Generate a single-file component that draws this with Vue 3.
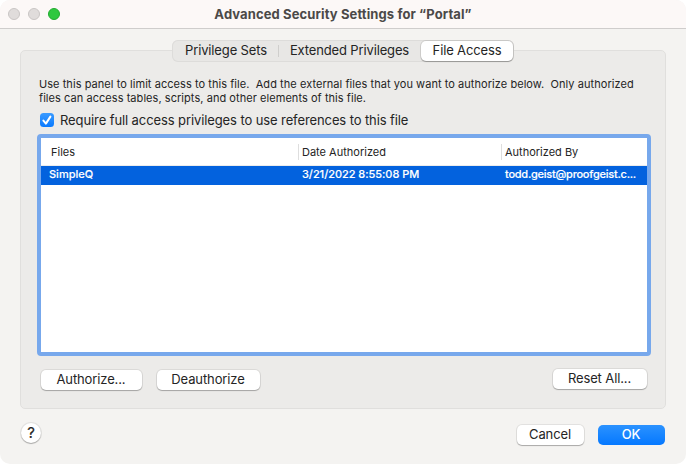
<script setup>
import { ref } from 'vue'

const tabs = [
  { id: 'sets', label: 'Privilege Sets' },
  { id: 'extended', label: 'Extended Privileges' },
  { id: 'files', label: 'File Access' },
]
const active = ref('files')
const required = ref(true)
const rows = [
  { file: 'SimpleQ', date: '3/21/2022 8:55:08 PM', by: 'todd.geist@proofgeist.c...' },
]
</script>

<template>
  <div class="window">
    <header class="titlebar">
      <div class="lights">
        <span class="light"></span>
        <span class="light"></span>
        <span class="light zoom"></span>
      </div>
      <h1 class="title">Advanced Security Settings for “Portal”</h1>
    </header>

    <main class="content">
      <nav class="tabs">
        <button
          v-for="tab in tabs"
          :key="tab.id"
          class="tab"
          :class="[tab.id, { active: tab.id === active }]"
          @click="active = tab.id"
        >{{ tab.label }}</button>
      </nav>

      <section class="panel">
        <p class="hint">
          <span class="line">Use this panel to limit access to this file.&nbsp; Add the external files that you want to authorize below.&nbsp; Only authorized</span>
          <span class="line">files can access tables, scripts, and other elements of this file.</span>
        </p>
        <div class="check" @click="required = !required">
          <span class="box">
            <svg v-if="required" viewBox="0 0 14 14" width="14" height="14">
              <path d="M3.4 7.6 5.9 10.6 10.4 3.6" fill="none" stroke="#fff" stroke-width="2" stroke-linecap="round" stroke-linejoin="round" />
            </svg>
          </span>
          <span class="check-label">Require full access privileges to use references to this file</span>
        </div>

        <div class="list">
          <div class="head">
            <span class="cell first">Files</span>
            <span class="cell">Date Authorized</span>
            <span class="cell">Authorized By</span>
          </div>
          <div v-for="row in rows" :key="row.file" class="row">
            <span class="name">{{ row.file }}</span>
            <span class="date">{{ row.date }}</span>
            <span class="by">{{ row.by }}</span>
          </div>
        </div>

        <div class="actions">
          <button class="btn authorize">Authorize...</button>
          <button class="btn deauthorize">Deauthorize</button>
          <button class="btn reset">Reset All...</button>
        </div>
      </section>

      <footer class="footer">
        <button class="help">?</button>
        <button class="btn cancel">Cancel</button>
        <button class="btn ok">OK</button>
      </footer>
    </main>
  </div>
</template>

<style>
body {
  margin: 0;
  background: #fff;
}
</style>

<style scoped>
.window {
  box-sizing: border-box;
  width: 686px;
  height: 464px;
  border-radius: 10px;
  overflow: hidden;
  background: #f4f3f1;
  color: #242424;
  font-family: Inter, "Liberation Sans", sans-serif;
  font-size: 13px;
}
button {
  box-sizing: border-box;
  margin: 0;
  padding: 0;
  border: 0;
  font: inherit;
  color: inherit;
  white-space: nowrap;
}
.titlebar {
  box-sizing: border-box;
  display: grid;
  grid-template-columns: 60px 1fr 60px;
  align-items: center;
  height: 29px;
  background: #fcf8f7;
  border-bottom: 1px solid #cfcdcc;
}
.lights {
  display: flex;
  gap: 8px;
  padding-left: 8px;
}
.light {
  box-sizing: border-box;
  flex: none;
  width: 12px;
  height: 12px;
  border-radius: 50%;
  background: #e0dcdb;
  border: 1px solid #c9c5c4;
}
.light.zoom {
  background: #2fc840;
  border-color: #22ab30;
}
.title {
  margin: 0;
  text-align: center;
  font-size: 13px;
  line-height: 16px;
  font-weight: 700;
  letter-spacing: .11px;
  color: #4b4948;
  white-space: nowrap;
}
.content {
  padding: 11px 20px 0;
}
.tabs {
  position: relative;
  z-index: 1;
  box-sizing: border-box;
  display: flex;
  width: 342px;
  height: 22px;
  margin: 0 auto -12px 152px;
  background: #e8e7e5;
  border-radius: 6px;
  box-shadow: inset 0 0 0 1px #dddcda;
}
.tab {
  height: 22px;
  padding-bottom: 2px;
  line-height: 18px;
  background: none;
  text-align: center;
  letter-spacing: -.14px;
}
.tab.sets {
  width: 107px;
  padding-left: 1px;
  background: linear-gradient(#cfcecc, #cfcecc) right 0 top 5px / 1px 12px no-repeat;
}
.tab.extended {
  width: 142px;
  padding-right: 1px;
}
.tab.active {
  width: 92px;
  height: 20px;
  margin-top: 1px;
  line-height: 16px;
  border-radius: 5px;
  background: #fff;
  box-shadow: 0 0 0 1px rgba(0, 0, 0, .09), 0 1px 1px rgba(0, 0, 0, .25);
}
.panel {
  box-sizing: border-box;
  width: 646px;
  height: 359px;
  padding: 26px 16px 0;
  background: #ecebe9;
  border: 1px solid #e0dfdd;
  border-radius: 5px;
}
.hint {
  margin: 0 0 0 2px;
  font-size: 11px;
  line-height: 14px;
  letter-spacing: .054px;
  white-space: nowrap;
}
.line { display: block; }
.check {
  display: flex;
  align-items: center;
  height: 16px;
  margin: 7px 0 0 3px;
  gap: 6px;
  letter-spacing: -.1px;
  white-space: nowrap;
}
.box {
  width: 14px;
  height: 14px;
  border-radius: 3.5px;
  background: linear-gradient(#3b9bff, #0a7aff);
}
.box svg { display: block; }
.list {
  box-sizing: border-box;
  width: 614px;
  height: 222px;
  margin-top: 6px;
  background: #fff;
  border: 4px solid #77a8ec;
  border-radius: 4px;
  font-size: 11px;
  white-space: nowrap;
}
.head {
  box-sizing: border-box;
  display: grid;
  grid-template-columns: 257px 203px 1fr;
  align-items: center;
  height: 28px;
  padding-top: 1px;
  border-bottom: 1px solid #ececec;
}
.cell {
  height: 16px;
  line-height: 16px;
  padding-left: 3px;
  border-left: 1px solid #dedede;
}
.cell.first {
  border: 0;
  padding-left: 10px;
}
.row {
  display: grid;
  grid-template-columns: 253px 203px 1fr;
  height: 19px;
  line-height: 17px;
  padding-left: 8px;
  background: #0362de;
  color: #fff;
  font-weight: 500;
  -webkit-text-stroke: .15px #fff;
}
.date { letter-spacing: -.04px; }
.by { letter-spacing: -.24px; }
.actions {
  display: flex;
  margin: 14px 2px 0 4px;
}
.btn {
  height: 20px;
  padding: 0 1px 2px 0;
  line-height: 16px;
  border-radius: 5px;
  background: #fff;
  text-align: center;
  letter-spacing: -.12px;
  box-shadow: 0 0 0 1px rgba(0, 0, 0, .07), 0 1px 1px rgba(0, 0, 0, .25);
}
.authorize { width: 101px; }
.deauthorize {
  width: 103px;
  margin-left: 15px;
}
.reset {
  width: 94px;
  margin: -1px 0 0 auto;
}
.footer {
  display: flex;
  align-items: center;
  height: 22px;
  margin-top: 15px;
  padding: 0 1px;
}
.help {
  width: 20px;
  height: 20px;
  margin: -4px auto 0 0;
  border-radius: 50%;
  background: #fff;
  font-size: 15px;
  line-height: 20px;
  text-align: center;
  -webkit-text-stroke: .2px #242424;
  box-shadow: 0 0 0 1px rgba(0, 0, 0, .07), 0 1px 1px rgba(0, 0, 0, .25);
}
.cancel {
  width: 67px;
  margin-right: 14px;
}
.ok {
  width: 67px;
  color: #fff;
  font-weight: 500;
  letter-spacing: -.3px;
  background: linear-gradient(#2b92ff, #0578ff);
  box-shadow: none;
}
</style>
